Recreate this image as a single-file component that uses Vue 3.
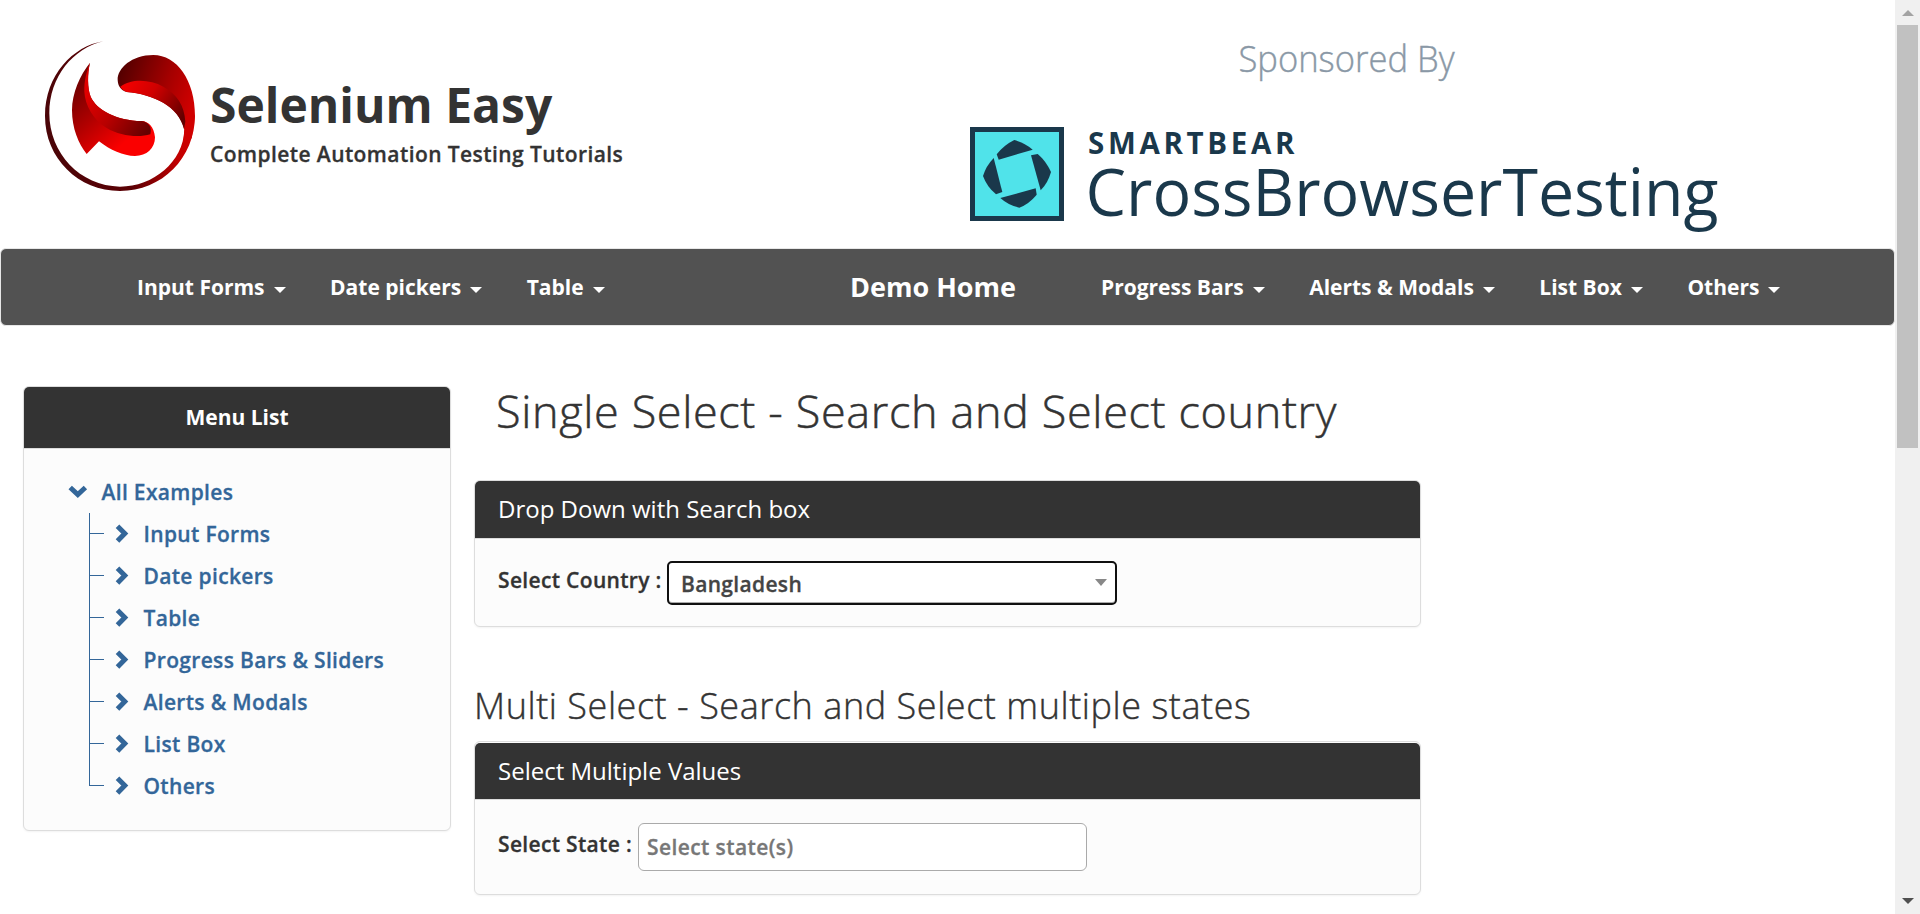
<script setup>
const leftNav = ['Input Forms', 'Date pickers', 'Table']
const rightNav = ['Progress Bars', 'Alerts & Modals', 'List Box', 'Others']
const tree = ['Input Forms', 'Date pickers', 'Table', 'Progress Bars & Sliders', 'Alerts & Modals', 'List Box', 'Others']
</script>

<template>
  <div class="screen">
    <div class="page">
      <header class="top">
        <svg class="logo" viewBox="45 33 450 450" width="150" height="150">
          <defs>
            <linearGradient id="ring" gradientUnits="userSpaceOnUse" x1="45" y1="300" x2="495" y2="220">
              <stop offset="0" stop-color="#4a0508" /><stop offset=".5" stop-color="#5c0004" /><stop offset=".82" stop-color="#c00000" /><stop offset="1" stop-color="#d80000" />
            </linearGradient>
            <linearGradient id="cap" gradientUnits="userSpaceOnUse" x1="275" y1="120" x2="495" y2="200">
              <stop offset="0" stop-color="#560000" /><stop offset=".6" stop-color="#a40000" /><stop offset="1" stop-color="#d00000" />
            </linearGradient>
            <linearGradient id="fold" gradientUnits="userSpaceOnUse" x1="300" y1="150" x2="465" y2="250">
              <stop offset="0" stop-color="#f00000" /><stop offset=".4" stop-color="#d00000" /><stop offset="1" stop-color="#640000" />
            </linearGradient>
            <linearGradient id="body" gradientUnits="userSpaceOnUse" x1="125" y1="190" x2="270" y2="350">
              <stop offset="0" stop-color="#780000" /><stop offset=".45" stop-color="#b00000" /><stop offset="1" stop-color="#fa0000" />
            </linearGradient>
            <linearGradient id="inner" gradientUnits="userSpaceOnUse" x1="170" y1="190" x2="350" y2="310">
              <stop offset="0" stop-color="#e00000" /><stop offset=".45" stop-color="#b80000" /><stop offset="1" stop-color="#640000" />
            </linearGradient>
          </defs>
          <path fill="url(#ring)" d="M220 34C130 48 45 135 45 258C45 385 145 483 270 483C395 483 495 385 495 255L463 300C460 395 370 470 270 470C150 468 58 370 58 250C58 140 130 55 220 34Z" />
          <path fill="url(#cap)" d="M495 258C495 150 440 75 370 75C305 75 262 115 263 150C264 168 272 180 290 186C370 193 450 230 463 300L460 335L485 325Z" />
          <path fill="url(#fold)" d="M271 170C305 145 360 148 400 170C440 192 463 225 466 275L462 297C445 228 370 193 290 186C281 182 275 177 271 170Z" />
          <path fill="url(#body)" d="M180 98C150 135 126 190 126 240C126 295 145 340 170 372L207 334C240 360 280 378 315 378C350 378 375 355 375 322C372 290 355 274 335 273C260 272 200 240 182 200C172 175 172 130 180 98Z" />
          <path fill="url(#inner)" d="M180 98C172 130 172 175 182 200C200 240 260 272 335 273C355 276 367 290 361 313C325 324 270 318 230 294C190 270 165 225 163 185C162 150 170 125 180 98Z" />
        </svg>
        <div class="brand">
          <h1>Selenium Easy</h1>
          <p>Complete Automation Testing Tutorials</p>
        </div>
        <svg class="sponsor" width="770" height="228" viewBox="960 20 770 228">
          <text class="spons" x="1238.500" y="72.300" textLength="216" lengthAdjust="spacingAndGlyphs">Sponsored By</text>
          <rect x="972.500" y="129.500" width="89" height="89" fill="#50e3ea" stroke="#1a384b" stroke-width="5" />
          <g transform="translate(970 127)" fill="#1a384b">
            <path d="M44.300 13Q55 16 62.700 22.700L28.700 32.700L26.700 27.300Q34 18 44.300 13Z" />
            <path d="M67.700 27Q76 34 81 45Q78 56 70.700 63.300L61 28.300Z" />
            <path d="M65.700 61.300L66.700 67.700Q59 77 49.300 80.700Q38 78 30.300 71Z" />
            <path d="M23.700 31L32.300 65L26 67.300Q17 60 13 49Q16 39 23.700 31Z" />
          </g>
          <text class="bear" x="1088" y="153.700" textLength="206.500">SMARTBEAR</text>
          <text class="cbt" x="1085.500" y="216" textLength="633" lengthAdjust="spacingAndGlyphs">CrossBrowserTesting</text>
        </svg>
      </header>

      <nav class="navbar">
        <div class="links left">
          <a v-for="l in leftNav" :key="l">{{ l }}<i class="caret" /></a>
        </div>
        <a class="home">Demo Home</a>
        <div class="links right">
          <a v-for="l in rightNav" :key="l">{{ l }}<i class="caret" /></a>
        </div>
      </nav>

      <div class="columns">
        <aside class="panel side">
          <div class="side-head">Menu List</div>
          <div class="tree">
            <div class="root">
              <svg width="20" height="14" viewBox="0 0 20 14"><path d="M2.200 2.500L9.800 9.500L17.400 2.500" /></svg>
              <span>All Examples</span>
            </div>
            <ul>
              <li v-for="t in tree" :key="t">
                <svg width="14" height="20" viewBox="0 0 14 20"><path d="M2.500 2.200L9.800 9.600L2.500 17" /></svg>
                <span>{{ t }}</span>
              </li>
            </ul>
          </div>
        </aside>

        <main>
          <h2>Single Select - Search and Select country</h2>
          <section class="panel first">
            <h4>Drop Down with Search box</h4>
            <div class="field">
              <label>Select Country :</label>
              <div class="select"><span>Bangladesh</span><i /></div>
            </div>
          </section>
          <h3>Multi Select - Search and Select multiple states</h3>
          <section class="panel second">
            <h4>Select Multiple Values</h4>
            <div class="field">
              <label>Select State :</label>
              <div class="multi">Select state(s)</div>
            </div>
          </section>
        </main>
      </div>
    </div>

    <div class="scroll">
      <i class="up" />
      <div class="thumb" />
      <i class="down" />
    </div>
  </div>
</template>

<style>
body { background: #fff; overflow: hidden; }
</style>

<style scoped>
* { box-sizing: border-box; margin: 0; padding: 0; }
.screen {
  display: flex;
  width: 1920px;
  height: 914px;
  overflow: hidden;
  font-family: "Open Sans", sans-serif;
  font-size: 21px;
  font-weight: 600;
  line-height: 30px;
  color: #333;
  white-space: nowrap;
}
.page { width: 1895px; height: 914px; }
.top { display: flex; height: 248px; }
.logo { flex: none; margin: 41px 0 0 45px; }
.brand { flex: none; width: 765px; padding: 78px 0 0 15px; }
h1 { font-size: 48px; font-weight: 700; line-height: 54px; }
.brand p { margin-top: 7px; letter-spacing: .42px; -webkit-text-stroke: .3px; }
.sponsor { flex: none; margin-top: 20px; }
.spons { font-size: 36px; font-weight: 300; fill: #8a98a6; stroke: #8a98a6; stroke-width: .4px; }
.bear { font-size: 29.500px; font-weight: 700; fill: #1a384b; }
.cbt { font-size: 65px; font-weight: 400; fill: #1a384b; }

.navbar {
  display: flex;
  align-items: center;
  height: 78px;
  background: #525252;
  border: 1px solid #e7e7e7;
  border-radius: 6px;
  color: #fff;
  font-weight: 700;
}
.links { display: flex; gap: 44.5px; }
.links a { display: flex; align-items: center; }
.left { width: 713px; margin-left: 136px; }
.home { width: 251px; font-size: 27px; }
.caret {
  margin: 5px 0 0 9px;
  border-top: 6px solid #fff;
  border-left: 6px solid transparent;
  border-right: 6px solid transparent;
}

.columns { display: flex; align-items: flex-start; gap: 23px; padding: 60px 0 0 23px; }
.panel {
  background: #fcfcfc;
  border: 1px solid #ddd;
  border-radius: 6px;
  box-shadow: 0 1px 2px rgba(0, 0, 0, .05);
}
.side { width: 428px; height: 445px; }
.side-head {
  height: 62px;
  padding-top: 15px;
  background: #333;
  border-bottom: 1px solid #ddd;
  border-radius: 5px 5px 0 0;
  color: #fff;
  font-weight: 700;
  text-align: center;
}
.tree { padding: 22px 0 0 44px; color: #336699; letter-spacing: .33px; -webkit-text-stroke: .3px; }
.tree svg path { fill: none; stroke: #336699; stroke-width: 5; }
.root { display: flex; align-items: center; height: 42px; }
.root svg { margin-right: 13.500px; }
ul { position: relative; list-style: none; margin-left: 21px; }
ul::before {
  content: "";
  position: absolute;
  left: 0;
  top: 0;
  width: 1px;
  height: 272px;
  background: #336699;
}
li { display: flex; align-items: center; height: 42px; }
li::before { content: ""; width: 15px; height: 1px; margin-top: -1px; background: #336699; }
li svg { margin: 0 14.500px 0 11px; }

main { width: 947px; }
h2 { height: 50px; padding-left: 22px; font-size: 45px; font-weight: 300; line-height: 50px; letter-spacing: .63px; -webkit-text-stroke: .5px; }
h3 { height: 40px; margin-top: 59px; font-size: 36px; font-weight: 300; line-height: 40px; letter-spacing: .56px; -webkit-text-stroke: .4px; }
h4 {
  height: 58px;
  padding: 15px 23px;
  background: #333;
  border-bottom: 1px solid #ddd;
  border-radius: 5px 5px 0 0;
  color: #fff;
  font-size: 24px;
  font-weight: 400;
  line-height: 26px;
}
.first { height: 147px; margin-top: 44px; }
.second { height: 154px; margin-top: 15px; padding-top: 1px; }
.second h4 { height: 57px; }
.field { display: flex; align-items: flex-start; padding: 22px 23px; letter-spacing: .33px; -webkit-text-stroke: .3px; }
.first label { width: 169px; margin-top: 4px; }
.select {
  display: flex;
  align-items: center;
  justify-content: space-between;
  width: 450px;
  height: 44px;
  padding: 2px 8px 0 12px;
  border: 2px solid #101010;
  border-radius: 5px;
  background: #fff;
  box-shadow: inset 0 -1px #aaa;
  color: #444;
}
.select i {
  margin-top: -3px;
  border-top: 7px solid #888;
  border-left: 6px solid transparent;
  border-right: 6px solid transparent;
}
.second .field { padding-top: 23px; }
.second label { width: 140px; margin-top: 6px; }
.multi {
  width: 449px;
  height: 48px;
  padding: 8px;
  border: 1px solid #aaa;
  border-radius: 6px;
  background: #fff;
  color: #777;
  letter-spacing: .4px;
}

.scroll { display: flex; flex-direction: column; align-items: center; width: 25px; height: 914px; background: #f0f0f0; }
.up { margin-top: 10px; border-bottom: 6px solid #a3a3a3; border-left: 6px solid transparent; border-right: 6px solid transparent; }
.thumb { width: 21px; height: 423px; margin-top: 9px; background: #c1c1c1; }
.down { margin-top: 450px; border-top: 6px solid #505050; border-left: 6px solid transparent; border-right: 6px solid transparent; }
</style>
